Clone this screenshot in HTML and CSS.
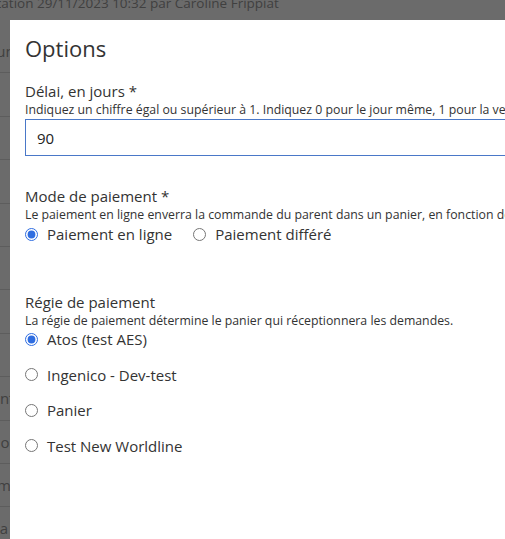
FILE: index.html
```html
<!DOCTYPE html>
<html lang="fr">

<head>
    <meta charset="UTF-8">
    <meta name="viewport" content="width=device-width, initial-scale=1.0">
    <title>Options</title>
    <link rel="stylesheet" href="styles.css">
</head>

<body>
<div class="page">
    <p class="page-meta">Modification 29/11/2023 10:32 par Caroline Frippiat</p>
    <div class="page-table">
        <div class="page-row"><span>Commun</span></div>
        <div class="page-row"><span></span></div>
        <div class="page-row"><span></span></div>
        <div class="page-row"><span></span></div>
        <div class="page-row"><span></span></div>
        <div class="page-row"><span></span></div>
        <div class="page-row"><span></span></div>
        <div class="page-row"><span></span></div>
        <div class="page-row"><span>Paiement</span></div>
        <div class="page-row"><span>Mode</span></div>
        <div class="page-row"><span>Format</span></div>
        <div class="page-row"><span>la sélection</span></div>
    </div>
</div>

<div class="backdrop"></div>

<div class="modal">
    <h2 class="modal-title">Options</h2>

    <div class="field">
        <label class="field-label" for="delai">Délai, en jours *</label>
        <p class="field-help">Indiquez un chiffre égal ou supérieur à 1. Indiquez 0 pour le jour même, 1 pour la veille, etc.</p>
        <input class="field-input" id="delai" type="text" value="90">
    </div>

    <div class="field">
        <span class="field-label">Mode de paiement *</span>
        <p class="field-help">Le paiement en ligne enverra la commande du parent dans un panier, en fonction de la régie de paiement.</p>
        <div class="radio-inline">
            <label class="radio"><input type="radio" name="mode" checked> Paiement en ligne</label>
            <label class="radio"><input type="radio" name="mode"> Paiement différé</label>
        </div>
    </div>

    <div class="field">
        <span class="field-label">Régie de paiement</span>
        <p class="field-help">La régie de paiement détermine le panier qui réceptionnera les demandes.</p>
        <div class="radio-list">
            <label class="radio"><input type="radio" name="regie" checked> Atos (test AES)</label>
            <label class="radio"><input type="radio" name="regie"> Ingenico - Dev-test</label>
            <label class="radio"><input type="radio" name="regie"> Panier</label>
            <label class="radio"><input type="radio" name="regie"> Test New Worldline</label>
        </div>
    </div>
</div>
</body>

</html>
```

FILE: styles.css
```css
html, body {
    margin: 0;
    padding: 0;
    width: 505px;
    height: 539px;
    overflow: hidden;
}

body {
    font-family: 'Open Sans', sans-serif;
    background-color: #fff;
    color: #333;
    position: relative;
}

/* page behind the dialog */
.page {
    margin-left: -36px;
}

.page-meta {
    margin: 0;
    margin-top: -7px;
    font-size: 13.5px;
    line-height: 20px;
    color: #999;
    white-space: nowrap;
    text-indent: -9px;
}

.page-table {
    margin-top: 17px;
}

.page-row {
    height: 43.4px;
    border-bottom: 1px solid #ddd;
    box-sizing: border-box;
    font-size: 15px;
    color: #999;
    white-space: nowrap;
    display: flex;
    align-items: center;
}

.page-row:nth-child(1) span {
    margin-left: -14px;
}

.page-row:nth-child(9) span {
    margin-left: -16px;
}

.page-row:nth-child(10) span {
    margin-left: 23px;
}

.page-row:nth-child(11) span {
    margin-left: 10px;
}

.page-row:nth-child(12) span {
    margin-left: 32px;
}

.backdrop {
    position: absolute;
    inset: 0;
    background-color: rgba(0, 0, 0, 0.58);
}

/* dialog */
.modal {
    position: absolute;
    left: 10px;
    top: 20px;
    width: 720px;
    height: 600px;
    background-color: #fff;
    padding: 0 15px;
    box-sizing: border-box;
}

.modal-title {
    margin: 0;
    padding-top: 13px;
    font-size: 22px;
    font-weight: 400;
    line-height: 30px;
    color: #333;
}

.field {
    margin-top: 18px;
}

.field + .field {
    margin-top: 30px;
}

.field:last-child {
    margin-top: 48px;
}

.field-label {
    display: block;
    font-size: 15px;
    line-height: 20px;
    color: #333;
}

.field-help {
    margin: 0;
    font-size: 12.3px;
    line-height: 17px;
    color: #333;
    white-space: nowrap;
}

.field-input {
    display: block;
    width: 100%;
    height: 37px;
    margin-top: 1px;
    padding: 0 11px;
    box-sizing: border-box;
    border: 1px solid #4a78c8;
    border-radius: 0;
    font-family: inherit;
    font-size: 15px;
    color: #222;
    outline: none;
}

.radio {
    font-size: 15px;
    line-height: 20px;
    color: #333;
    display: inline-flex;
    align-items: center;
}

.radio input {
    width: 13px;
    height: 13px;
    margin: 0 9px 0 0;
    accent-color: #2f6de0;
}

.radio-inline {
    display: flex;
    gap: 21px;
    margin-top: 1px;
}

.radio-list {
    display: flex;
    flex-direction: column;
    align-items: flex-start;
    gap: 15.5px;
}
```
